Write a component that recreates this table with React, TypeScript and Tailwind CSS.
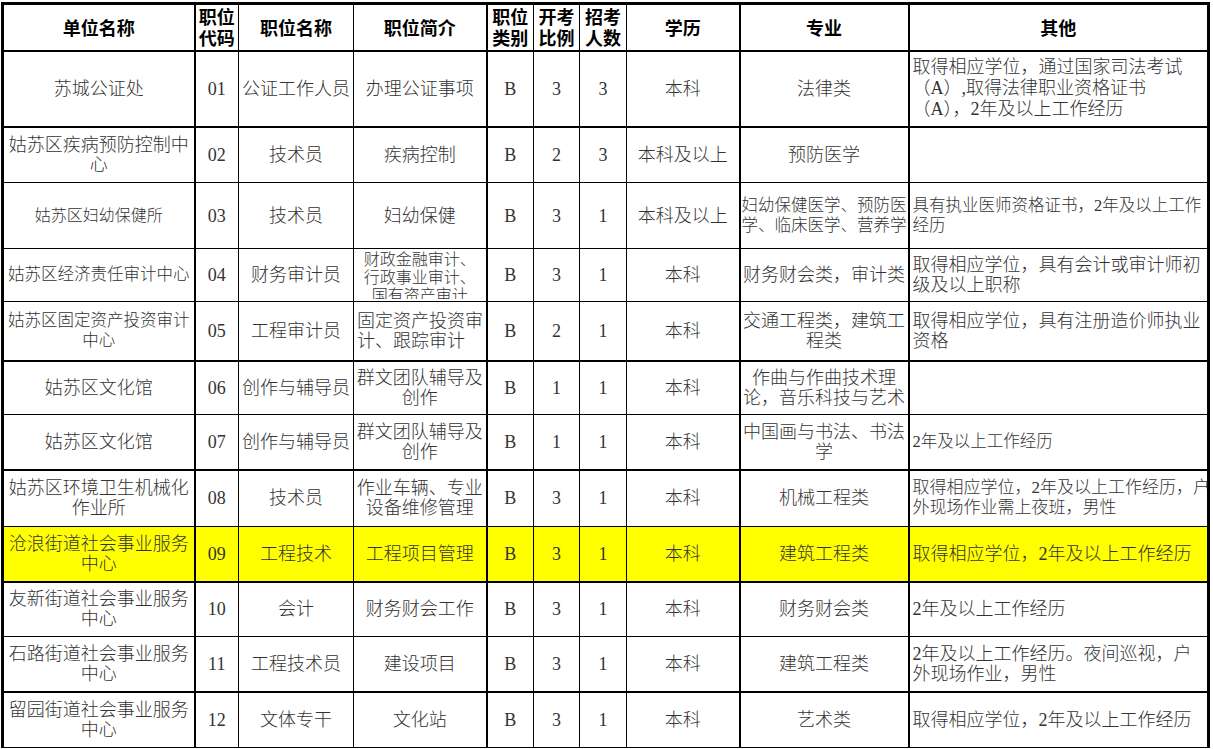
import React from 'react';

type Cell = string | string[];

interface RowData {
  cells: Cell[];
  h: string;
  thick?: boolean;
  hl?: boolean;
  extra?: Record<number, string>;
}

const COL_WIDTHS = [
  'w-[192px]',
  'w-[44px]',
  'w-[115px]',
  'w-[133px]',
  'w-[47px]',
  'w-[46px]',
  'w-[47px]',
  'w-[113px]',
  'w-[169px]',
  'w-[300px]',
];

// vertical line weights per column (right edge)
const COL_BORDERS = [
  'border-l-[3px] border-r-2',
  'border-r',
  'border-r',
  'border-r-2',
  'border-r',
  'border-r',
  'border-r',
  'border-r-2',
  'border-r-2',
  'border-r-[3px]',
];

const HEADER: Cell[] = [
  '单位名称',
  ['职位', '代码'],
  '职位名称',
  '职位简介',
  ['职位', '类别'],
  ['开考', '比例'],
  ['招考', '人数'],
  '学历',
  '专业',
  '其他',
];

const ROWS: RowData[] = [
  {
    h: 'h-[76px]',
    thick: true,
    extra: { 9: 'leading-[21px]' },
    cells: [
      '苏城公证处', '01', '公证工作人员', '办理公证事项', 'B', '3', '3', '本科', '法律类',
      ['取得相应学位，通过国家司法考试', '（A）,取得法律职业资格证书', '（A），2年及以上工作经历'],
    ],
  },
  {
    h: 'h-[56px]',
    cells: [
      ['姑苏区疾病预防控制中', '心'], '02', '技术员', '疾病控制', 'B', '2', '3', '本科及以上', '预防医学', '',
    ],
  },
  {
    h: 'h-[66px]',
    extra: { 0: 'text-[16px]', 8: 'text-[16.5px]', 9: 'text-[16.5px]' },
    cells: [
      '姑苏区妇幼保健所', '03', '技术员', '妇幼保健', 'B', '3', '1', '本科及以上',
      ['妇幼保健医学、预防医', '学、临床医学、营养学'],
      ['具有执业医师资格证书，2年及以上工作', '经历'],
    ],
  },
  {
    h: 'h-[53px]',
    extra: { 0: 'text-[16.5px]', 3: 'clip' },
    cells: [
      '姑苏区经济责任审计中心', '04', '财务审计员',
      ['财政金融审计、', '行政事业审计、', '国有资产审计'],
      'B', '3', '1', '本科', '财务财会类，审计类',
      ['取得相应学位，具有会计或审计师初', '级及以上职称'],
    ],
  },
  {
    h: 'h-[59px]',
    thick: true,
    extra: { 0: 'text-[16.5px]', 3: 'text-left pl-[3px]' },
    cells: [
      ['姑苏区固定资产投资审计', '中心'], '05', '工程审计员', ['固定资产投资审', '计、跟踪审计'],
      'B', '2', '1', '本科', ['交通工程类，建筑工', '程类'],
      ['取得相应学位，具有注册造价师执业', '资格'],
    ],
  },
  {
    h: 'h-[54px]',
    cells: [
      '姑苏区文化馆', '06', '创作与辅导员', ['群文团队辅导及', '创作'], 'B', '1', '1', '本科',
      ['作曲与作曲技术理', '论，音乐科技与艺术'], '',
    ],
  },
  {
    h: 'h-[55px]',
    thick: true,
    extra: { 9: 'text-[16.5px]' },
    cells: [
      '姑苏区文化馆', '07', '创作与辅导员', ['群文团队辅导及', '创作'], 'B', '1', '1', '本科',
      ['中国画与书法、书法', '学'], '2年及以上工作经历',
    ],
  },
  {
    h: 'h-[57px]',
    extra: { 9: 'text-[17px]' },
    cells: [
      ['姑苏区环境卫生机械化', '作业所'], '08', '技术员', ['作业车辆、专业', '设备维修管理'],
      'B', '3', '1', '本科', '机械工程类',
      ['取得相应学位，2年及以上工作经历，户', '外现场作业需上夜班，男性'],
    ],
  },
  {
    h: 'h-[55px]',
    thick: true,
    hl: true,
    cells: [
      ['沧浪街道社会事业服务', '中心'], '09', '工程技术', '工程项目管理', 'B', '3', '1', '本科',
      '建筑工程类', '取得相应学位，2年及以上工作经历',
    ],
  },
  {
    h: 'h-[55px]',
    cells: [
      ['友新街道社会事业服务', '中心'], '10', '会计', '财务财会工作', 'B', '3', '1', '本科',
      '财务财会类', '2年及以上工作经历',
    ],
  },
  {
    h: 'h-[55px]',
    thick: true,
    cells: [
      ['石路街道社会事业服务', '中心'], '11', '工程技术员', '建设项目', 'B', '3', '1', '本科',
      '建筑工程类', ['2年及以上工作经历。夜间巡视，户', '外现场作业，男性'],
    ],
  },
  {
    h: 'h-[56px]',
    cells: [
      ['留园街道社会事业服务', '中心'], '12', '文体专干', '文化站', 'B', '3', '1', '本科',
      '艺术类', '取得相应学位，2年及以上工作经历',
    ],
  },
];

function Lines({ value }: { value: Cell }) {
  const lines = Array.isArray(value) ? value : [value];
  return (
    <>
      {lines.map((line, i) => (
        <React.Fragment key={i}>
          {i > 0 && <br />}
          {line}
        </React.Fragment>
      ))}
    </>
  );
}

export default function App() {
  return (
    <div className="min-h-[749px] w-[1213px] bg-white pl-px pt-[2px]">
      <table className="w-[1209px] table-fixed border-collapse font-['Liberation_Serif','Noto_Sans_CJK_SC',serif] text-[18px] leading-[20px] text-[#333]">
        <colgroup>
          {COL_WIDTHS.map((w, i) => (
            <col key={i} className={w} />
          ))}
        </colgroup>
        <thead>
          <tr className="h-[47px]">
            {HEADER.map((c, i) => (
              <th
                key={i}
                className={`border-t-[3px] border-b-2 border-black p-0 text-center align-middle font-['Noto_Sans_CJK_SC',sans-serif] text-[18px] font-bold leading-[21px] whitespace-nowrap text-black ${COL_BORDERS[i]}`}
              >
                <Lines value={c} />
              </th>
            ))}
          </tr>
        </thead>
        <tbody>
          {ROWS.map((row, r) => (
            <tr key={r} className={`${row.h} ${row.hl ? 'bg-[#ffff00]' : ''}`}>
              {row.cells.map((c, i) => {
                const extra = row.extra?.[i] ?? '';
                const align = i === 9 ? 'text-left pl-[3px]' : 'text-center';
                const bottom = row.thick ? 'border-b-2' : 'border-b';
                if (extra === 'clip') {
                  return (
                    <td key={i} className={`border-black p-0 align-top ${bottom} ${COL_BORDERS[i]}`}>
                      <div className="h-[50px] overflow-hidden pt-[2px] text-center text-[16px] leading-[18px] font-light whitespace-nowrap">
                        <Lines value={c} />
                      </div>
                    </td>
                  );
                }
                return (
                  <td
                    key={i}
                    className={`border-black p-0 align-middle whitespace-nowrap font-light ${align} ${bottom} ${COL_BORDERS[i]} ${extra}`}
                  >
                    <Lines value={c} />
                  </td>
                );
              })}
            </tr>
          ))}
        </tbody>
      </table>
    </div>
  );
}
